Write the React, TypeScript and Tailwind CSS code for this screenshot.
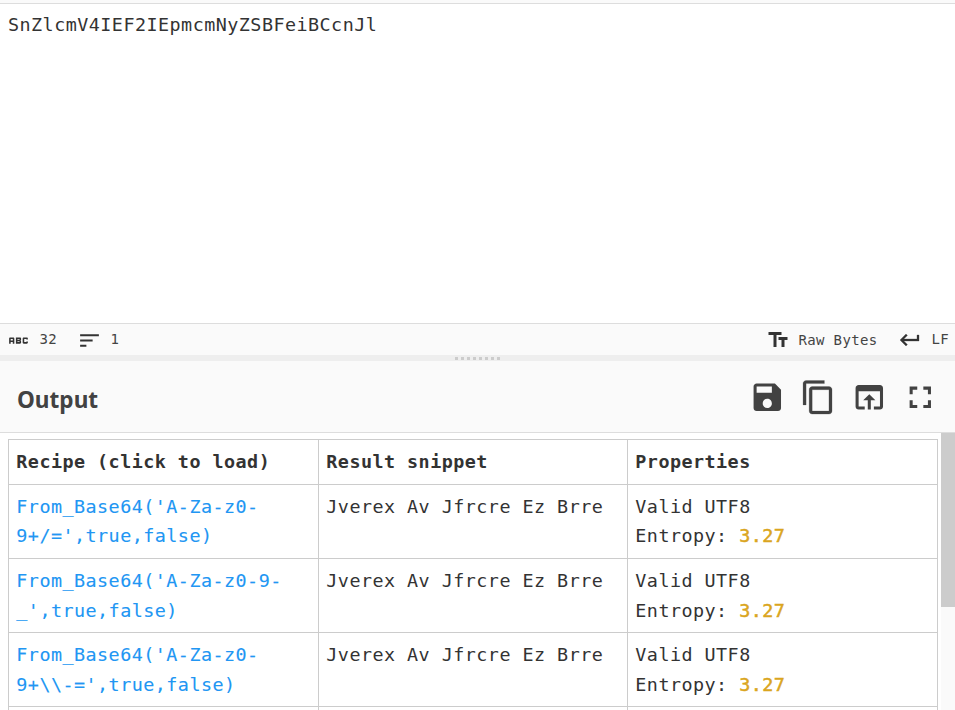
import React from "react";
import { MdAbc } from "react-icons/md";

const mono = "font-['Consolas','DejaVu_Sans_Mono',monospace]";

function Icon({ d, className }: { d: string; className: string }) {
  return (
    <svg viewBox="0 0 24 24" fill="currentColor" className={className}>
      <path d={d} />
    </svg>
  );
}

const icons = {
  sort: "M3 18h6v-2H3v2zM3 6v2h18V6H3zm0 7h12v-2H3v2z",
  text: "M2.5 4v3h5v12h3V7h5V4h-13zm19 5h-9v3h3v7h3v-7h3V9z",
  enter: "M19 7v4H5.83l3.58-3.59L8 6l-6 6 6 6 1.41-1.41L5.83 13H21V7z",
  save: "M17 3H5c-1.11 0-2 .9-2 2v14c0 1.1.89 2 2 2h14c1.1 0 2-.9 2-2V7l-4-4zm-5 16c-1.66 0-3-1.34-3-3s1.34-3 3-3 3 1.34 3 3-1.34 3-3 3zm3-10H5V5h10v4z",
  copy: "M16 1H4c-1.1 0-2 .9-2 2v14h2V3h12V1zm3 4H8c-1.1 0-2 .9-2 2v14c0 1.1.9 2 2 2h11c1.1 0 2-.9 2-2V7c0-1.1-.9-2-2-2zm0 16H8V7h11v14z",
  open: "M19 4H5c-1.11 0-2 .9-2 2v12c0 1.1.89 2 2 2h4v-2H5V8h14v10h-4v2h4c1.1 0 2-.9 2-2V6c0-1.1-.89-2-2-2zm-7 6l-4 4h3v6h2v-6h3l-4-4z",
  full: "M7 14H5v5h5v-2H7v-3zm-2-4h2V7h3V5H5v5zm12 7h-3v2h5v-5h-2v3zM14 5v2h3v3h2V5h-5z",
};

const rows = [
  { recipe: ["From_Base64('A-Za-z0-", "9+/=',true,false)"], leading: "leading-[29.4px]" },
  { recipe: ["From_Base64('A-Za-z0-9-", "_',true,false)"], leading: "leading-[29.7px]" },
  { recipe: ["From_Base64('A-Za-z0-", "9+\\\\-=',true,false)"], leading: "leading-[29.7px]" },
];

const cell = "border-r border-b border-[#ccc] pl-[7.3px] pt-[7px] whitespace-nowrap";

export default function App() {
  return (
    <div className={`flex h-[710px] w-[955px] flex-col overflow-hidden bg-white text-[#333] ${mono}`}>
      <div className="h-1 shrink-0 border-b border-[#ddd] bg-[#fafafa]" />
      <div className="h-[319px] shrink-0 pl-2 pt-[6px] text-[18.4px] leading-[30px] tracking-[0.468px]">
        SnZlcmV4IEF2IEpmcmNyZSBFeiBCcnJl
      </div>
      <div className="flex h-8 shrink-0 items-center border-t border-[#ddd] bg-[#fafafa] text-[14px] tracking-[0.37px] text-[#444]">
        <MdAbc className="ml-[6px] mt-[1px] size-[25px] text-[#333]" />
        <span className="ml-[8.5px] w-[18px]">32</span>
        <Icon d={icons.sort} className="ml-[19.5px] mt-[2px] size-[25px] text-[#333]" />
        <span className="ml-[8.5px]">1</span>
        <Icon d={icons.text} className="ml-auto size-6 text-[#333]" />
        <span className="ml-2 mt-[2px] w-[80px]">Raw Bytes</span>
        <Icon d={icons.enter} className="ml-5 size-6 stroke-[#333] stroke-[0.3] text-[#333]" />
        <span className="ml-[9px] mr-[6px]">LF</span>
      </div>
      <div className="flex h-[6px] shrink-0 items-center justify-center gap-[3px] bg-[#eee] pt-px">
        {Array.from({ length: 8 }, (_, i) => (
          <span key={i} className="size-[3px] bg-[#ccc]" />
        ))}
      </div>
      <div className="flex h-[72px] shrink-0 items-center border-b border-[#ddd] bg-[#fafafa] pl-[17px] pr-[16.6px] text-[#424242]">
        <h2 className="mr-auto mt-[7.5px] font-['Noto_Sans',sans-serif] text-[22.6px] font-bold">Output</h2>
        <div className="mt-[1.4px] flex gap-[14.4px]">
          <Icon d={icons.save} className="size-[36.6px]" />
          <Icon d={icons.copy} className="size-[36.6px] stroke-[#424242] stroke-[0.15]" />
          <Icon d={icons.open} className="size-[36.6px]" />
          <Icon d={icons.full} className="size-[36.6px]" />
        </div>
      </div>
      <div className="flex h-[277px] shrink-0 overflow-hidden">
        <div className="w-[941px] pl-2 pt-[6px] text-[18.4px] leading-[29.7px] tracking-[0.468px]">
          <div className="grid w-[930px] grid-cols-[310px_309px_310px] grid-rows-[45px_74px_74px_74px_74px] border-l border-t border-[#ccc]">
            <div className={`${cell} font-bold`}>Recipe (click to load)</div>
            <div className={`${cell} font-bold`}>Result snippet</div>
            <div className={`${cell} font-bold`}>Properties</div>
            {rows.map(({ recipe: [a, b], leading }) => (
              <React.Fragment key={a + b}>
                <div className={`${cell} ${leading} text-[#2196f3] [-webkit-text-stroke:0.1px_#2196f3]`}>
                  {a}
                  <br />
                  {b}
                </div>
                <div className={`${cell} ${leading}`}>Jverex Av Jfrcre Ez Brre</div>
                <div className={`${cell} ${leading}`}>
                  Valid UTF8
                  <br />
                  Entropy: <span className="text-[#daa520] [-webkit-text-stroke:0.5px_#daa520]">3.27</span>
                </div>
              </React.Fragment>
            ))}
            <div className={cell} />
            <div className={cell} />
            <div className={cell} />
          </div>
        </div>
        <div className="w-[14px] bg-[#fafafa]">
          <div className="h-[174px] bg-[#ccc]" />
        </div>
      </div>
    </div>
  );
}
